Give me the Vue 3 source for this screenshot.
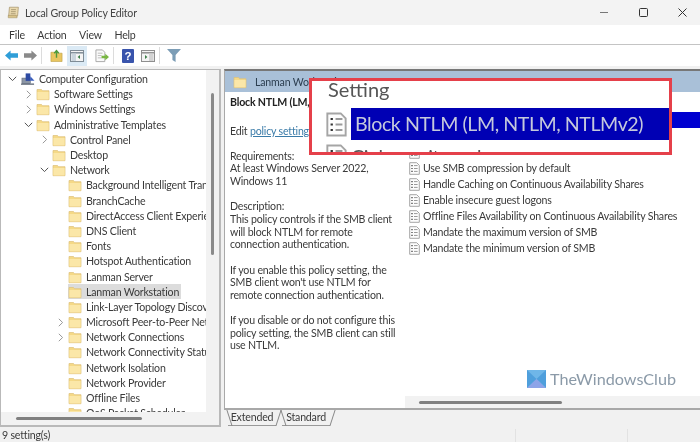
<script setup>
const menus = ['File', 'Action', 'View', 'Help']
const tree = [
  { t: 'Computer Configuration', l: 0, c: 'down', root: true },
  { t: 'Software Settings', l: 1, c: 'right' },
  { t: 'Windows Settings', l: 1, c: 'right' },
  { t: 'Administrative Templates', l: 1, c: 'down' },
  { t: 'Control Panel', l: 2, c: 'right' },
  { t: 'Desktop', l: 2 },
  { t: 'Network', l: 2, c: 'down' },
  { t: 'Background Intelligent Transfer Service', l: 3 },
  { t: 'BranchCache', l: 3 },
  { t: 'DirectAccess Client Experience Settings', l: 3 },
  { t: 'DNS Client', l: 3 },
  { t: 'Fonts', l: 3 },
  { t: 'Hotspot Authentication', l: 3 },
  { t: 'Lanman Server', l: 3 },
  { t: 'Lanman Workstation', l: 3, sel: true },
  { t: 'Link-Layer Topology Discovery', l: 3 },
  { t: 'Microsoft Peer-to-Peer Networking', l: 3, c: 'right' },
  { t: 'Network Connections', l: 3, c: 'right' },
  { t: 'Network Connectivity Status Indicator', l: 3 },
  { t: 'Network Isolation', l: 3 },
  { t: 'Network Provider', l: 3 },
  { t: 'Offline Files', l: 3 },
  { t: 'QoS Packet Scheduler', l: 3 }
]
const settings = [
  { t: 'Block NTLM (LM, NTLM, NTLMv2)', sel: true },
  { t: 'Cipher suite order' },
  { t: '' },
  { t: 'Use SMB compression by default' },
  { t: 'Handle Caching on Continuous Availability Shares' },
  { t: 'Enable insecure guest logons' },
  { t: 'Offline Files Availability on Continuous Availability Shares' },
  { t: 'Mandate the maximum version of SMB' },
  { t: 'Mandate the minimum version of SMB' }
]
const paragraphs = [
  ['Requirements:', 'At least Windows Server 2022,', 'Windows 11'],
  ['Description:', 'This policy controls if the SMB client', 'will block NTLM for remote', 'connection authentication.'],
  ["If you enable this policy setting, the", "SMB client won't use NTLM for", 'remote connection authentication.'],
  ['If you disable or do not configure this', 'policy setting, the SMB client can still', 'use NTLM.']
]
</script>

<template>
  <div class="app">
    <svg class="defs" width="0" height="0">
      <symbol id="folder" viewBox="0 0 14 14">
        <path d="M1 2.5h4.5l1 1.2H13v9H1z" fill="#f5d987" stroke="#dcc07a" stroke-width=".7" />
        <path d="M1.4 5h11.2v7.4H1.4z" fill="#fbe7a8" />
      </symbol>
      <symbol id="doc" viewBox="0 0 11 13">
        <path d="M.7.7h7l2.6 2.6v9H.7z" fill="#fdfdfd" stroke="#a5a5a5" />
        <path d="M2.4 3.6h1.2M2.4 6.5h1.2M2.4 9.4h1.2" stroke="#333" stroke-width="1.1" />
        <path d="M5 3.6h3.6M5 6.5h3.6M5 9.4h3.6" stroke="#9a9a9a" />
      </symbol>
    </svg>

    <header class="title">
      <svg class="app-icon" width="13" height="15" viewBox="0 0 16 17">
        <path d="M3 2h11l-1 11H2z" fill="#ead9ae" stroke="#9d8a5e" stroke-width=".8" />
        <path d="M1.5 12h10l1 3h-11z" fill="#d9c389" stroke="#9d8a5e" stroke-width=".6" />
        <path d="M5 5h6M4.8 7.5h6M4.6 10h6" stroke="#8d7d58" stroke-width=".8" />
      </svg>
      <span class="title-text">Local Group Policy Editor</span>
      <div class="win">
        <svg width="9" height="9" viewBox="0 0 9 9"><path d="M0 4.5h8" stroke="#777" /></svg>
        <svg width="9" height="9" viewBox="0 0 9 9"><rect x=".5" y=".5" width="8" height="8" rx="1" fill="none" stroke="#333" /></svg>
        <svg width="9" height="9" viewBox="0 0 9 9"><path d="M.5.5l8 8M8.5.5l-8 8" stroke="#333" /></svg>
      </div>
    </header>

    <nav class="menu">
      <span v-for="m in menus" :key="m">{{ m }}</span>
    </nav>

    <div class="toolbar">
      <svg width="13" height="11" viewBox="0 0 14 11"><path d="M0 5.5L6 0v3h8v5H6v3z" fill="#2f9ed8" /></svg>
      <svg class="t-next" width="13" height="11" viewBox="0 0 14 11"><path d="M14 5.5L8 0v3H0v5h8v3z" fill="#8a8a8a" /></svg>
      <i class="sep s-a"></i>
      <svg class="t-up" width="13" height="13" viewBox="0 0 14 13">
        <path d="M1 3h4l1 1h7v9H1z" fill="#e9c660" stroke="#b99a3c" stroke-width=".6" />
        <path d="M7 9V2M4.6 4L7 1.2 9.4 4" fill="none" stroke="#4e9a3a" stroke-width="1.5" />
      </svg>
      <span class="t-active">
        <svg width="14" height="12" viewBox="0 0 14 12">
          <rect x=".5" y=".5" width="13" height="11" fill="#f4f4f4" stroke="#7f8c96" />
          <path d="M.5 2.8h13" stroke="#7f8c96" stroke-width="1.5" />
          <rect x="1.5" y="3.5" width="4.5" height="7.5" fill="#c9d4dc" />
          <path d="M10 5L7.6 7 10 9z" fill="#3d7f48" />
        </svg>
      </span>
      <svg class="t-export" width="14" height="14" viewBox="0 0 15 14">
        <path d="M1 .5h7l2.5 2.5v10H1z" fill="#fafafa" stroke="#a6a6a6" />
        <path d="M3 4h5M3 6.5h4M3 9h4" stroke="#bbb" />
        <path d="M7 6.6h4V4.5L15 8l-4 3.5V9.4H7z" fill="#79b743" />
      </svg>
      <i class="sep"></i>
      <svg class="t-help" width="12" height="14" viewBox="0 0 12 14">
        <rect width="12" height="14" rx="1" fill="#3954ac" />
        <text x="6" y="11.4" text-anchor="middle" font-size="11.5" font-weight="700" font-family="Liberation Sans, sans-serif" fill="#fff">?</text>
      </svg>
      <svg class="t-pane" width="14" height="12" viewBox="0 0 14 12">
        <rect x=".5" y=".5" width="13" height="11" fill="#f4f4f4" stroke="#8f8f8f" />
        <path d="M.5 2.8h13" stroke="#8f8f8f" stroke-width="1.5" />
        <rect x="8" y="3.5" width="4.5" height="7.5" fill="#d3d3d3" />
        <path d="M4 5l2.4 2L4 9z" fill="#3d7f48" />
      </svg>
      <i class="sep"></i>
      <svg class="t-filter" width="14" height="13" viewBox="0 0 14 13"><path d="M0 0h14L8.6 6v7L5.4 11V6z" fill="#7c9db6" /></svg>
    </div>

    <main class="main">
      <section class="tree-pane">
        <div class="tree-top">
          <ul class="tree">
            <li v-for="n in tree" :key="n.t" class="node" :class="'lvl' + n.l">
              <span class="chev">
                <svg v-if="n.c === 'down'" class="c-down" width="9" height="6" viewBox="0 0 9 6"><path d="M.8.8L4.5 4.6 8.2.8" fill="none" stroke="#555" stroke-width="1" /></svg>
                <svg v-else-if="n.c === 'right'" class="c-right" width="6" height="9" viewBox="0 0 6 9"><path d="M.8.8L4.6 4.5.8 8.2" fill="none" stroke="#999" stroke-width="1" /></svg>
              </span>
              <span class="entry" :class="{ sel: n.sel }">
                <svg v-if="n.root" class="ico root-ico" width="14" height="14" viewBox="0 0 15 14">
                  <rect x="1" y="6" width="9" height="6" fill="#8b95a5" stroke="#5f6877" stroke-width=".6" />
                  <rect x="5" y="1" width="5" height="8" fill="#2d4aa3" />
                  <path d="M10 4l4.5 5H10z" fill="#3a5fc0" />
                  <path d="M0 12.5h14" stroke="#5f6877" stroke-width="1.4" />
                </svg>
                <svg v-else class="ico" width="14" height="14"><use href="#folder" /></svg>
                <span class="label">{{ n.t }}</span>
              </span>
            </li>
          </ul>
          <div class="vscroll"><i></i></div>
        </div>
        <div class="hscroll tree-h"><i></i></div>
      </section>

      <section class="right">
        <div class="panel">
          <div class="panel-head">
            <svg width="14" height="14"><use href="#folder" /></svg>
            <span>Lanman Workstation</span>
          </div>
          <div class="panel-body">
            <article class="desc">
              <h2>Block NTLM (LM, NTLM, NTLMv2)</h2>
              <p class="edit">Edit <a>policy setting</a></p>
              <p v-for="(p, i) in paragraphs" :key="i" class="para">
                <span v-for="l in p" :key="l">{{ l }}</span>
              </p>
            </article>
            <div class="list">
              <div v-for="(s, i) in settings" :key="i" class="row" :class="{ sel: s.sel }">
                <svg width="11" height="13"><use href="#doc" /></svg>
                <span>{{ s.t }}</span>
              </div>
              <div class="hscroll list-h"><i></i></div>
            </div>
          </div>
        </div>
        <div class="tabs">
          <span class="tab">Extended</span>
          <span class="tab">Standard</span>
        </div>
      </section>

      <div class="callout">
        <div class="c-head">Setting</div>
        <div class="c-row">
          <svg width="21" height="25"><use href="#doc" /></svg>
          <span class="c-sel">Block NTLM (LM, NTLM, NTLMv2)</span>
        </div>
        <div class="c-row c-next">
          <svg width="21" height="25"><use href="#doc" /></svg>
          <span>Cipher suite order</span>
        </div>
      </div>

      <div class="mark">
        <svg width="19" height="18" viewBox="0 0 19 18">
          <rect width="19" height="18" fill="#6fb6e8" />
          <path d="M0 0l9.5 9L19 0v18L9.5 9 0 18z" fill="#4f9fdc" />
          <path d="M0 18l9.5-9L19 18z" fill="#8da4e8" />
        </svg>
        <span>TheWindowsClub</span>
      </div>
    </main>

    <footer class="status">
      <span class="s1">9 setting(s)</span>
      <span class="s2"></span>
      <span class="s3"></span>
    </footer>
  </div>
</template>

<style scoped>
.app {
  width: 700px;
  height: 442px;
  overflow: hidden;
  display: flex;
  flex-direction: column;
  background: #f1f1f1;
  color: #3a3a3a;
  font-family: Lato, "Open Sans", sans-serif;
  font-size: 10.6px;
  letter-spacing: -0.19px;
  filter: blur(0.4px);
}
.defs { position: absolute; }
.title {
  height: 25px;
  flex: none;
  display: flex;
  align-items: center;
  padding-left: 7px;
  background: #f3f3f3;
}
.app-icon { margin-right: 5px; }
.title-text { color: #444; }
.win {
  margin-left: auto;
  display: flex;
  gap: 30px;
  padding-right: 13px;
  align-items: center;
}
.menu {
  height: 19px;
  flex: none;
  display: flex;
  align-items: center;
  gap: 12.5px;
  padding-left: 9px;
  background: #fff;
  border-bottom: 1px solid #c4c4c4;
}
.toolbar {
  height: 21px;
  flex: none;
  display: flex;
  align-items: center;
  padding-left: 5px;
  background: #fff;
}
.t-next { margin-left: 6px; }
.sep { width: 1px; height: 17px; background: #dcdcdc; }
.s-a { margin-left: 4px; }
.t-up { margin-left: 8px; }
.t-active {
  width: 20px;
  height: 20px;
  margin-left: 4px;
  background: #dbeaf5;
  display: flex;
  align-items: center;
  justify-content: center;
}
.t-export { margin: 0 4px 0 8px; }
.t-help { margin-left: 8px; }
.t-pane { margin: 0 4px 0 7px; }
.t-filter { margin-left: 7px; }

.main {
  flex: 1;
  min-height: 0;
  position: relative;
  display: flex;
  gap: 3px;
  padding-top: 3px;
}
.tree-pane {
  width: 221px;
  height: 358px;
  flex: none;
  box-sizing: border-box;
  background: #f2f2f2;
  border: 1px solid #b9b9b9;
  border-width: 1px 2px 2px 1px;
  display: flex;
  flex-direction: column;
}
.tree-top { flex: 1; min-height: 0; display: flex; }
.tree {
  list-style: none;
  margin: 0;
  padding: 1.5px 0 0;
  width: 205px;
  background: #fff;
  overflow: hidden;
  flex: none;
}
.node {
  height: 15.2px;
  display: flex;
  align-items: center;
  white-space: nowrap;
}
.lvl0 { padding-left: 5px; }
.lvl1 { padding-left: 21px; }
.lvl2 { padding-left: 37px; }
.lvl3 { padding-left: 53px; }
.chev { width: 14px; flex: none; display: flex; align-items: center; }
.c-down { margin-left: 2px; }
.c-right { margin-left: 4px; }
.entry { display: flex; align-items: center; height: 15px; }
.entry.sel { background: #dcdcdc; padding-right: 2px; }
.ico { flex: none; }
.root-ico { margin-left: 1px; }
.label { padding-left: 4px; }
.vscroll { flex: 1; position: relative; }
.vscroll i {
  display: block;
  width: 3px;
  height: 162px;
  margin: 23px 0 0 5px;
  background: #8a8a8a;
  border-radius: 2px;
}
.hscroll { background: #f2f2f2; }
.hscroll i { display: block; height: 3px; background: #808080; border-radius: 2px; }
.tree-h { height: 13px; flex: none; padding: 5px 0 0 15px; box-sizing: border-box; }
.tree-h i { width: 126px; }

.right { flex: 1; min-width: 0; display: flex; flex-direction: column; }
.panel {
  height: 341px;
  flex: none;
  box-sizing: border-box;
  border: 1px solid #a9a9a9;
  border-top: 2px solid #777;
  border-bottom: 2px solid #a8a8a8;
  border-right: 0;
  background: #fff;
  display: flex;
  flex-direction: column;
}
.panel-head {
  height: 21px;
  flex: none;
  display: flex;
  align-items: center;
  gap: 8px;
  padding-left: 8px;
  background: #a9c0d8;
  color: #2c3e50;
}
.panel-body { flex: 1; min-height: 0; display: flex; }
.desc {
  width: 180px;
  flex: none;
  box-sizing: border-box;
  padding: 3px 0 0 5px;
  line-height: 12.65px;
  overflow: hidden;
}
.desc h2 {
  margin: 0;
  font-size: 10.6px;
  font-weight: 700;
  color: #222;
  white-space: nowrap;
  line-height: 14px;
}
.edit { margin: 16px 0 0; white-space: nowrap; }
.edit a { color: #3a7ba8; text-decoration: underline; }
.para { margin: 0 0 12.65px; }
.edit + .para { margin-top: 12px; }
.para span { display: block; white-space: nowrap; }
.list {
  flex: 1;
  min-width: 0;
  position: relative;
  padding-top: 20px;
}
.row {
  height: 16px;
  display: flex;
  align-items: center;
  gap: 3px;
  padding-left: 4px;
  white-space: nowrap;
}
.row.sel { background: #0000d0; color: #fff; }
.list-h {
  position: absolute;
  left: 0;
  right: 0;
  bottom: 0;
  height: 12px;
  padding: 5px 0 0 14px;
  box-sizing: border-box;
}
.list-h i { width: 143px; }
.tabs {
  height: 17px;
  flex: none;
  display: flex;
  gap: 6px;
  padding-left: 4px;
  align-items: flex-start;
}
.tab {
  position: relative;
  width: 48px;
  height: 16px;
  line-height: 15px;
  text-align: center;
  border-bottom: 1px solid #999;
  box-sizing: border-box;
}
.tab::before,
.tab::after {
  content: "";
  position: absolute;
  top: 0;
  height: 16px;
  width: 1px;
  background: #888;
}
.tab::before { left: 1px; transform: skewX(18deg); }
.tab::after { right: -3px; transform: skewX(-18deg); }

.callout {
  position: absolute;
  left: 309px;
  top: 12px;
  width: 363px;
  height: 77px;
  box-sizing: border-box;
  border: 3px solid #e5404a;
  background: #fff;
  overflow: hidden;
  filter: blur(0.35px);
  letter-spacing: normal;
}
.c-head {
  font-size: 20px;
  height: 27px;
  line-height: 17px;
  padding-left: 16px;
  color: #555;
}
.c-row {
  display: flex;
  align-items: center;
  gap: 4px;
  height: 32px;
  padding-left: 14px;
  font-size: 19.6px;
  letter-spacing: -0.44px;
  white-space: nowrap;
  color: #555;
}
.c-row svg { flex: none; }
.c-sel {
  flex: 1;
  height: 32px;
  line-height: 32px;
  padding-left: 4px;
  background: #0000b4;
  color: #c5c9dc;
}

.mark {
  position: absolute;
  left: 527px;
  top: 303px;
  display: flex;
  align-items: center;
  gap: 4px;
  font-size: 16.2px;
  letter-spacing: 0;
  line-height: 20px;
  color: #8b9aa8;
}

.status {
  height: 16px;
  flex: none;
  display: flex;
  background: #f1f1f1;
}
.status span { box-sizing: border-box; border-right: 1px solid #e2e2e2; margin-top: 3px; line-height: 13px; }
.s1 { width: 516px; padding-left: 2px; }
.s2 { width: 112px; }
.s3 { flex: 1; border-right: 0 !important; }
</style>
